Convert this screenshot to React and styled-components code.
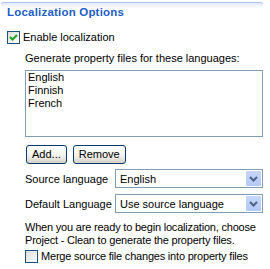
import React from "react";
import styled, { createGlobalStyle } from "styled-components";

const GlobalStyle = createGlobalStyle`
  html, body {
    margin: 0;
    padding: 0;
    background: #ffffff;
  }
  body {
    font-family: "Liberation Sans", Arial, sans-serif;
    font-size: 11px;
    color: #000000;
  }
`;

function CheckMark() {
  return (
    <svg width="9" height="9" viewBox="0 0 9 9">
      <path d="M1 4 L3.5 6.5 L8 2" fill="none" stroke="#21a121" strokeWidth="2" />
    </svg>
  );
}

function Chevron() {
  return (
    <svg width="9" height="6" viewBox="0 0 9 6">
      <path d="M1 1 L4.5 4.5 L8 1" fill="none" stroke="#4d6185" strokeWidth="2" />
    </svg>
  );
}

function App() {
  const languages = ["English", "Finnish", "French"];

  return (
    <>
      <GlobalStyle />
      <Page>
        <Section>
          <Title>Localization Options</Title>
          <CheckRow>
            <Box>
              <CheckMark />
            </Box>
            <span>Enable localization</span>
          </CheckRow>
          <Group>
            <Label>Generate property files for these languages:</Label>
            <List>
              {languages.map((lang) => (
                <Item key={lang}>{lang}</Item>
              ))}
            </List>
            <Buttons>
              <Button>Add...</Button>
              <Button>Remove</Button>
            </Buttons>
            <Form>
              <span>Source language</span>
              <Combo>
                <ComboText>English</ComboText>
                <Arrow>
                  <Chevron />
                </Arrow>
              </Combo>
              <span>Default Language</span>
              <Combo>
                <ComboText>Use source language</ComboText>
                <Arrow>
                  <Chevron />
                </Arrow>
              </Combo>
            </Form>
            <Note>
              When you are ready to begin localization, choose
              <br />
              Project - Clean to generate the property files.
            </Note>
            <CheckRow $compact>
              <Box />
              <span>Merge source file changes into property files</span>
            </CheckRow>
          </Group>
        </Section>
      </Page>
    </>
  );
}

const Page = styled.div`
  width: 270px;
  height: 269px;
  overflow: hidden;
  padding: 2px 7px 0 1px;
  box-sizing: border-box;
`;

const Section = styled.div`
  border-top: 1px solid #a9bff0;
  border-radius: 3px 3px 0 0;
  background: linear-gradient(#e4ebfb, #ffffff 6px);
  padding: 2px 0 0 0;
`;

const Title = styled.div`
  font-weight: bold;
  font-size: 11.5px;
  color: #215dc6;
  line-height: 14px;
  padding-left: 6px;
  letter-spacing: 0.2px;
`;

const CheckRow = styled.label`
  display: flex;
  align-items: center;
  gap: 3px;
  line-height: 13px;
  white-space: nowrap;
  letter-spacing: ${(p) => (p.$compact ? "-0.2px" : "0")};
  margin-top: ${(p) => (p.$compact ? "3px" : "12px")};
  padding-left: ${(p) => (p.$compact ? "0" : "6px")};
`;

const Box = styled.span`
  display: flex;
  flex: none;
  align-items: center;
  justify-content: center;
  width: 11px;
  height: 11px;
  border: 1px solid #1c5180;
  background: linear-gradient(135deg, #dcdcd7, #ffffff);
`;

const Group = styled.div`
  padding-left: 24px;
  display: flex;
  flex-direction: column;
`;

const Label = styled.div`
  line-height: 13px;
  margin-top: 8px;
`;

const List = styled.div`
  margin-top: 5px;
  height: 65px;
  border: 1px solid #7f9db9;
  padding: 0 2px;
  line-height: 13px;
`;

const Item = styled.div``;

const Buttons = styled.div`
  display: flex;
  gap: 6px;
  margin-top: 8px;
  padding-left: 1px;
`;

const Button = styled.div`
  height: 17px;
  line-height: 17px;
  padding: 0 5px;
  border: 1px solid #003c74;
  border-radius: 3px;
  background: linear-gradient(#ffffff, #f0f0ea 60%, #d6d0c5);
`;

const Form = styled.div`
  display: grid;
  grid-template-columns: 90px 1fr;
  align-items: center;
  row-gap: 6px;
  margin-top: 5px;
`;

const Combo = styled.div`
  display: flex;
  align-items: center;
  height: 19px;
  border: 1px solid #7f9db9;
  box-sizing: border-box;
  padding: 1px;
`;

const ComboText = styled.div`
  flex: 1;
  padding-left: 3px;
`;

const Arrow = styled.div`
  display: flex;
  align-items: center;
  justify-content: center;
  width: 15px;
  height: 15px;
  border-radius: 1px;
  background: linear-gradient(#c6d6fc, #b5c8f7);
`;

const Note = styled.div`
  line-height: 13px;
  margin-top: 8px;
  white-space: nowrap;
  letter-spacing: -0.2px;
`;

export default App;
